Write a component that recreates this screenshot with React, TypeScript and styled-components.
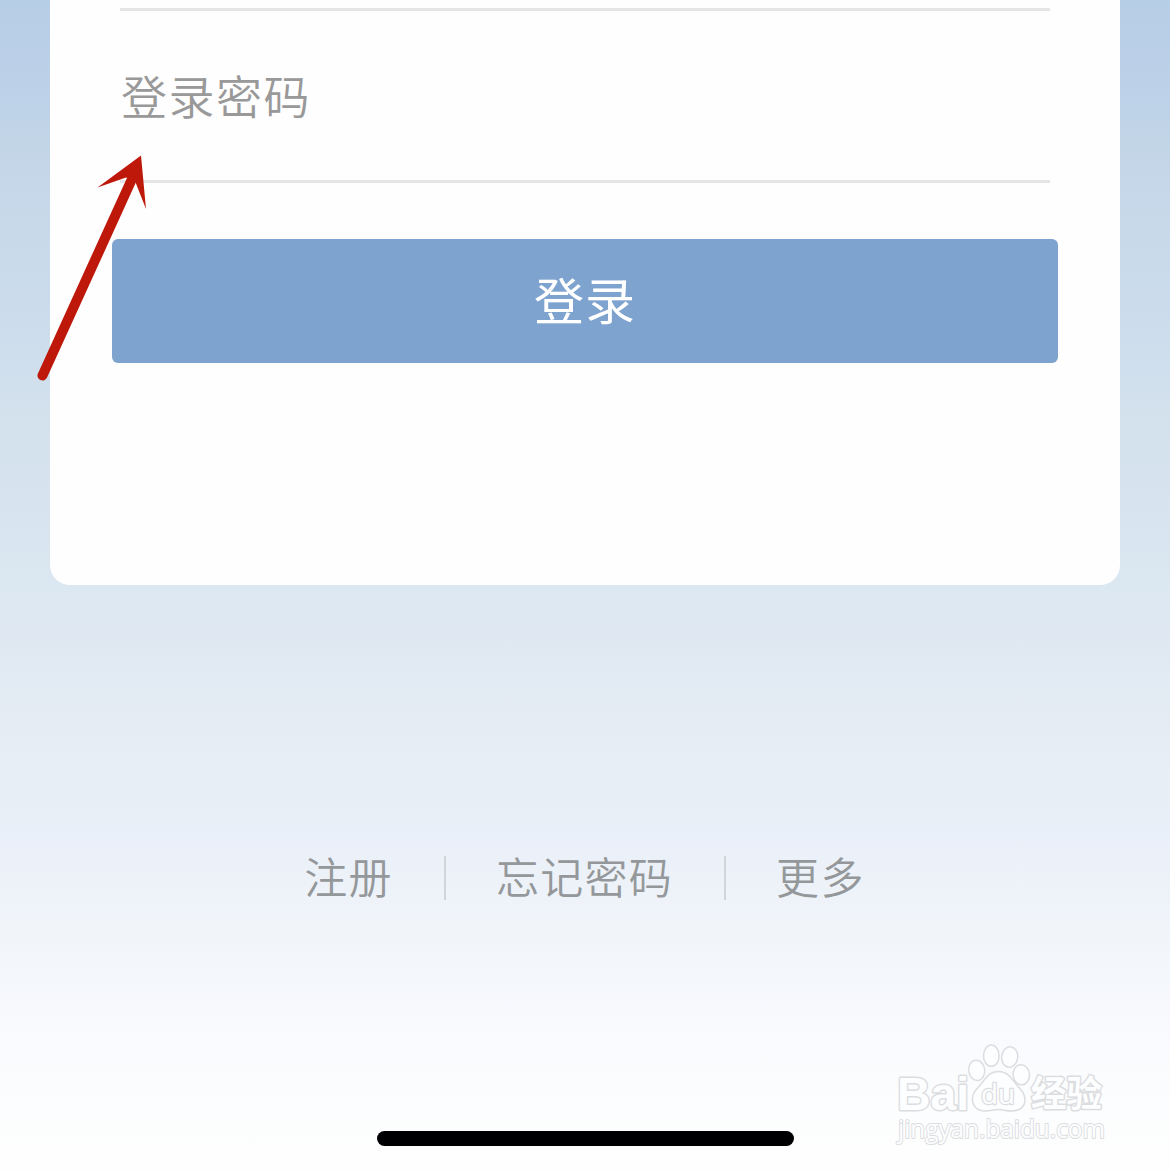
import React from 'react';
import styled, { createGlobalStyle } from 'styled-components';

const links = [
  { id: 1, label: '注册' },
  { id: 2, label: '忘记密码' },
  { id: 3, label: '更多' },
];

const toes = [
  { cx: 976.7, cy: 1070.3, rx: 8, ry: 10.2, tilt: -8 },
  { cx: 991.3, cy: 1055.7, rx: 7.8, ry: 10.6, tilt: 0 },
  { cx: 1009.7, cy: 1057, rx: 8, ry: 10.2, tilt: 8 },
  { cx: 1021.3, cy: 1074.7, rx: 8.2, ry: 10, tilt: -5 },
];

const App = () => {
  return (
    <>
      <GlobalStyle />
      <Screen>
        <Card>
          <Field />
          <Field>
            <PasswordInput type="text" placeholder="登录密码" />
          </Field>
          <LoginButton type="button">登录</LoginButton>
        </Card>
        <LinkBar>
          {links.map((link) => (
            <LinkItem key={link.id}>{link.label}</LinkItem>
          ))}
        </LinkBar>
        <HomeIndicator />
        <Overlay viewBox="0 0 1170 1170" aria-hidden="true">
          <g fill="#bd180a">
            <path d="M42.5 375.5 L131.5 180" stroke="#bd180a" strokeWidth="10" strokeLinecap="round" />
            <path d="M141 155.5 L97.5 187.5 L126 177.5 L135 181 L146 209 Z" />
          </g>
          <Watermark>
            <BrandText x="897" y="1109.5" textLength="72" lengthAdjust="spacingAndGlyphs">
              Bai
            </BrandText>
            {toes.map((toe) => (
              <ellipse
                key={toe.cx}
                cx={toe.cx}
                cy={toe.cy}
                rx={toe.rx}
                ry={toe.ry}
                transform={`rotate(${toe.tilt} ${toe.cx} ${toe.cy})`}
              />
            ))}
            <path d="M998.5 1071.5 C1008 1071.5 1012 1079 1016 1084 C1021 1090 1025 1093 1025 1100 C1025 1107 1019 1111 1012 1111 C1006 1111 1003 1109.5 998.5 1109.5 C994 1109.5 990 1111 985 1111 C978 1111 972.5 1107 972.5 1099 C972.5 1092 977 1089 982 1083 C986 1078 989 1071.5 998.5 1071.5 Z" />
            <DuText x="981" y="1104" textLength="34" lengthAdjust="spacingAndGlyphs">
              du
            </DuText>
            <ChineseText x="1031" y="1107" textLength="71" lengthAdjust="spacingAndGlyphs">
              经验
            </ChineseText>
            <SiteText x="898" y="1137.5" textLength="207" lengthAdjust="spacingAndGlyphs">
              jingyan.baidu.com
            </SiteText>
          </Watermark>
        </Overlay>
      </Screen>
    </>
  );
};

const GlobalStyle = createGlobalStyle`
  * {
    box-sizing: border-box;
  }

  body {
    margin: 0;
    font-family: 'Noto Sans CJK SC', sans-serif;
    font-weight: 400;
  }
`;

const Screen = styled.main`
  position: relative;
  width: 1170px;
  height: 1170px;
  overflow: hidden;
  display: flex;
  flex-direction: column;
  align-items: center;
  background: linear-gradient(
    180deg,
    #b7cee7 0px,
    #bed2e8 110px,
    #c3d6e7 150px,
    #cbdbec 300px,
    #d3e1ed 410px,
    #dbe7f1 590px,
    #dfe8f2 630px,
    #e6edf4 750px,
    #eaf0f9 840px,
    #f0f4f9 920px,
    #f7f9fd 1010px,
    #fcfdfe 1100px,
    #fefefe 1170px
  );
`;

const Card = styled.section`
  width: 1070px;
  height: 585px;
  padding: 0 62px;
  display: flex;
  flex-direction: column;
  background: #fefefe;
  border-radius: 0 0 20px 20px;
`;

const Field = styled.div`
  margin: 0 8px;
  border-bottom: 3px solid #e5e5e6;

  &:first-child {
    height: 11px;
  }

  &:nth-child(2) {
    height: 172px;
  }
`;

const PasswordInput = styled.input`
  width: 100%;
  height: 169px;
  padding: 0 0 4px 1px;
  border: none;
  outline: none;
  background: transparent;
  font-family: inherit;
  font-size: 46px;
  font-weight: 350;
  letter-spacing: 1.5px;

  &::placeholder {
    color: #999999;
  }
`;

const LoginButton = styled.button`
  height: 124px;
  margin-top: 56px;
  padding: 0 0 7px;
  border: none;
  border-radius: 6px;
  background: #7ea3cf;
  color: #ffffff;
  font-family: inherit;
  font-size: 50px;
  font-weight: 400;
  letter-spacing: 1px;
`;

const LinkBar = styled.nav`
  height: 44px;
  margin-top: 271px;
  display: flex;
  align-items: center;
`;

const LinkItem = styled.a`
  height: 44px;
  padding: 0 51px 0 50px;
  color: #95989a;
  font-size: 43px;
  font-weight: 350;
  line-height: 38px;
  letter-spacing: 1.3px;

  & + & {
    border-left: 2px solid #d0d5dc;
  }
`;

const HomeIndicator = styled.div`
  width: 417px;
  height: 15px;
  margin-top: 231px;
  border-radius: 8px;
  background: #000003;
`;

const Overlay = styled.svg`
  position: absolute;
  inset: 0;
  width: 1170px;
  height: 1170px;
  pointer-events: none;
`;

const Watermark = styled.g`
  fill: #fdfeff;
  stroke: #dcdde0;
  stroke-width: 1.5px;
  stroke-linejoin: round;
`;

const BrandText = styled.text`
  font-family: 'Liberation Sans', sans-serif;
  font-size: 47px;
  font-weight: 700;
  stroke-width: 3px;
  paint-order: stroke;
`;

const DuText = styled.text`
  font-family: 'Open Sans', sans-serif;
  font-size: 27px;
  font-weight: 400;
  stroke-width: 2.4px;
  paint-order: stroke;
`;

const ChineseText = styled.text`
  font-size: 36px;
  font-weight: 700;
  stroke-width: 3px;
  paint-order: stroke;
`;

const SiteText = styled.text`
  font-family: 'Open Sans', sans-serif;
  font-size: 25px;
  font-weight: 400;
  stroke-width: 2px;
  paint-order: stroke;
`;

export default App;
